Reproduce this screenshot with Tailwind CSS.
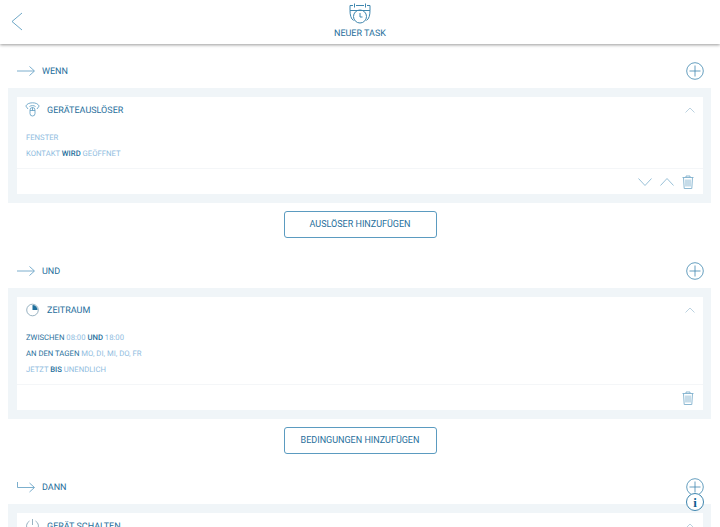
<!DOCTYPE html>
<html lang="en">
<head>
    <meta charset="UTF-8">
    <title>Neuer Task</title>
    <script src="https://cdn.jsdelivr.net/npm/@tailwindcss/browser@4"></script>
</head>
<body class="bg-white h-[527px] w-[720px] overflow-hidden relative font-['Roboto',sans-serif] text-[#1f6f9c] [text-rendering:geometricPrecision]">

    <!-- Header -->
    <header class="h-[44px] bg-white shadow-[0_1px_3px_rgba(0,0,0,0.4)] relative flex flex-col items-center">
        <svg class="absolute left-[11px] top-[12px]" width="12" height="19" viewBox="0 0 12 19" fill="none" stroke="#4a90b8" stroke-width="0.8"><path d="M11 1 L1 9.5 L11 18"/></svg>
        <svg class="mt-[3px]" width="22" height="21" viewBox="0 0 22 21" fill="none" stroke="#3f86ae" stroke-width="1"><path d="M4 2.500H1V7.500C1 12 2 16 4.500 17.500M21 7.500V2.500H18M7 2.500h8"/><path d="M1 7.500h20M21 7.500C21 12 20 16 17.500 17.500"/><path d="M5.500 .5v4M16.500 .5v4"/><circle cx="11" cy="13.500" r="6.500"/><path d="M11 10V14h2.500"/></svg>
        <div class="text-[9px] leading-[10px] mt-[5px]">NEUER TASK</div>
    </header>

    <main class="mt-[10px]">
        <!-- WENN -->
        <div class="h-[34px] pl-[17px] pr-[16px] flex items-center justify-between">
            <div class="flex items-center">
                <svg width="18" height="10" viewBox="0 0 18 10" fill="none" stroke="#5b9bc0" stroke-width="0.8"><path d="M0 5H17M12.500 .5 17.500 5 12.500 9.500"/></svg>
                <span class="text-[9px] ml-[7px] pt-[4px]">WENN</span>
            </div>
            <svg width="18" height="18" viewBox="0 0 18 18" fill="none" stroke="#3f86ae" stroke-width="0.8"><circle cx="9" cy="9" r="8.300"/><path d="M9 3.500v11M3.500 9h11"/></svg>
        </div>
        <section class="mx-[8px] w-[703px] bg-[#f0f5f8] p-[9px] pr-[8px]">
            <div class="bg-white h-[97px] flex flex-col">
                <div class="h-[25px] flex items-center pl-[8px] pr-[8px] justify-between">
                    <div class="flex items-center">
                        <svg width="15" height="15" viewBox="0 0 15 15" fill="none" stroke="#5b9bc0" stroke-width="0.8"><rect x="5" y="5.500" width="5" height="8.500" rx="2.500"/><path d="M5 8.500h5M7.500 5.500v3M3 7 .8 4C2 2 4 .8 7.500 .8S13 2 14.200 4L12 7M4.500 4.500C6 3.300 9 3.300 10.500 4.500"/></svg>
                        <span class="text-[9px] ml-[7px] pt-[4px]">GERÄTEAUSLÖSER</span>
                    </div>
                    <svg width="10" height="6" viewBox="0 0 10 6" fill="none" stroke="#a9c6d8" stroke-width="0.8"><path d="M.5 5.500 5 1l4.500 4.500"/></svg>
                </div>
                <div class="pl-[9px] pt-[8px] text-[7.7px] leading-[16px] text-[#8fbce0] h-[46px]">
                    <div>FENSTER</div>
                    <div>KONTAKT <span class="text-[#1f6f9c] font-medium">WIRD</span> GEÖFFNET</div>
                </div>
                <div class="flex-1 border-t border-[#f4f6f8] flex items-center justify-end gap-[8px] pr-[9px]">
                    <svg width="14" height="8" viewBox="0 0 14 8" fill="none" stroke="#7fb0cd" stroke-width="0.8"><path d="M.5 .5 7 7.500 13.500 .5"/></svg>
                    <svg width="14" height="8" viewBox="0 0 14 8" fill="none" stroke="#7fb0cd" stroke-width="0.8"><path d="M.5 7.500 7 .5 13.500 7.500"/></svg>
                    <svg width="12" height="14" viewBox="0 0 12 14" fill="none" stroke="#7fb0cd" stroke-width="0.9"><path d="M.5 2.500h11M4 2.500V1h4v1.500M1.500 2.500 2.200 13.500h7.600L10.500 2.500M4 4.500v7M6 4.500v7M8 4.500v7"/></svg>
                </div>
            </div>
        </section>
        <div class="flex justify-center mt-[8px]">
            <button class="w-[153px] h-[27px] border border-[#5b9bc0] rounded-[3px] text-[9px] pt-[1px]">AUSLÖSER HINZUFÜGEN</button>
        </div>

        <!-- UND -->
        <div class="mt-[16px] h-[34px] pl-[17px] pr-[16px] flex items-center justify-between">
            <div class="flex items-center">
                <svg width="18" height="10" viewBox="0 0 18 10" fill="none" stroke="#5b9bc0" stroke-width="0.8"><path d="M0 5H17M12.500 .5 17.500 5 12.500 9.500"/></svg>
                <span class="text-[9px] ml-[7px] pt-[4px]">UND</span>
            </div>
            <svg width="18" height="18" viewBox="0 0 18 18" fill="none" stroke="#3f86ae" stroke-width="0.8"><circle cx="9" cy="9" r="8.300"/><path d="M9 3.500v11M3.500 9h11"/></svg>
        </div>
        <section class="mx-[8px] w-[703px] bg-[#f0f5f8] p-[9px] pr-[8px]">
            <div class="bg-white h-[113px] flex flex-col">
                <div class="h-[25px] flex items-center pl-[8px] pr-[8px] justify-between">
                    <div class="flex items-center">
                        <svg width="15" height="15" viewBox="0 0 15 15" fill="none" stroke="#7f9fb3" stroke-width="0.8"><circle cx="7.500" cy="8" r="5.800"/><path d="M7.500 3V8H12.500A5 5 0 0 0 7.500 3Z" fill="#1f6f9c" stroke="none"/></svg>
                        <span class="text-[9px] ml-[7px] pt-[4px]">ZEITRAUM</span>
                    </div>
                    <svg width="10" height="6" viewBox="0 0 10 6" fill="none" stroke="#a9c6d8" stroke-width="0.8"><path d="M.5 5.500 5 1l4.500 4.500"/></svg>
                </div>
                <div class="pl-[9px] pt-[8px] text-[7.7px] leading-[16px] text-[#8fbce0] h-[62px]">
                    <div><span class="text-[#1f6f9c]">ZWISCHEN</span> 08:00 <span class="text-[#1f6f9c] font-medium">UND</span> 18:00</div>
                    <div><span class="text-[#1f6f9c]">AN DEN TAGEN</span> MO, DI, MI, DO, FR</div>
                    <div>JETZT <span class="text-[#1f6f9c] font-medium">BIS</span> UNENDLICH</div>
                </div>
                <div class="flex-1 border-t border-[#f4f6f8] flex items-center justify-end pr-[9px]">
                    <svg width="12" height="14" viewBox="0 0 12 14" fill="none" stroke="#7fb0cd" stroke-width="0.9"><path d="M.5 2.500h11M4 2.500V1h4v1.500M1.500 2.500 2.200 13.500h7.600L10.500 2.500M4 4.500v7M6 4.500v7M8 4.500v7"/></svg>
                </div>
            </div>
        </section>
        <div class="flex justify-center mt-[8px]">
            <button class="w-[153px] h-[27px] border border-[#5b9bc0] rounded-[3px] text-[9px] pt-[1px]">BEDINGUNGEN HINZUFÜGEN</button>
        </div>

        <!-- DANN -->
        <div class="mt-[16px] h-[34px] pl-[17px] pr-[16px] flex items-center justify-between">
            <div class="flex items-center">
                <svg width="18" height="11" viewBox="0 0 18 11" fill="none" stroke="#5b9bc0" stroke-width="0.8"><path d="M.5 0V5.500H17M12.500 1 17.500 5.500 12.500 10"/></svg>
                <span class="text-[9px] ml-[7px] pt-[4px]">DANN</span>
            </div>
            <svg width="18" height="18" viewBox="0 0 18 18" fill="none" stroke="#3f86ae" stroke-width="0.8"><circle cx="9" cy="9" r="8.300"/><path d="M9 3.500v11M3.500 9h11"/></svg>
        </div>
        <section class="mx-[8px] w-[703px] bg-[#f0f5f8] p-[9px] pr-[8px]">
            <div class="bg-white h-[97px] flex flex-col">
                <div class="h-[25px] flex items-center pl-[8px] pr-[8px] justify-between">
                    <div class="flex items-center">
                        <svg width="15" height="15" viewBox="0 0 15 15" fill="none" stroke="#7f9fb3" stroke-width="0.8"><path d="M4.500 3A6 6 0 1 0 10.500 3M7.500 1v6"/></svg>
                        <span class="text-[9px] ml-[7px] pt-[4px]">GERÄT SCHALTEN</span>
                    </div>
                    <svg width="10" height="6" viewBox="0 0 10 6" fill="none" stroke="#a9c6d8" stroke-width="0.8"><path d="M.5 5.500 5 1l4.500 4.500"/></svg>
                </div>
            </div>
        </section>
    </main>

    <!-- Info badge -->
    <div class="absolute left-[686px] top-[493px] w-[18px] h-[18px] rounded-full bg-white border border-[#3f86ae] flex items-center justify-center font-['Liberation_Serif',serif] font-bold text-[13px] leading-none text-[#0f5f92]">i</div>
</body>
</html>
